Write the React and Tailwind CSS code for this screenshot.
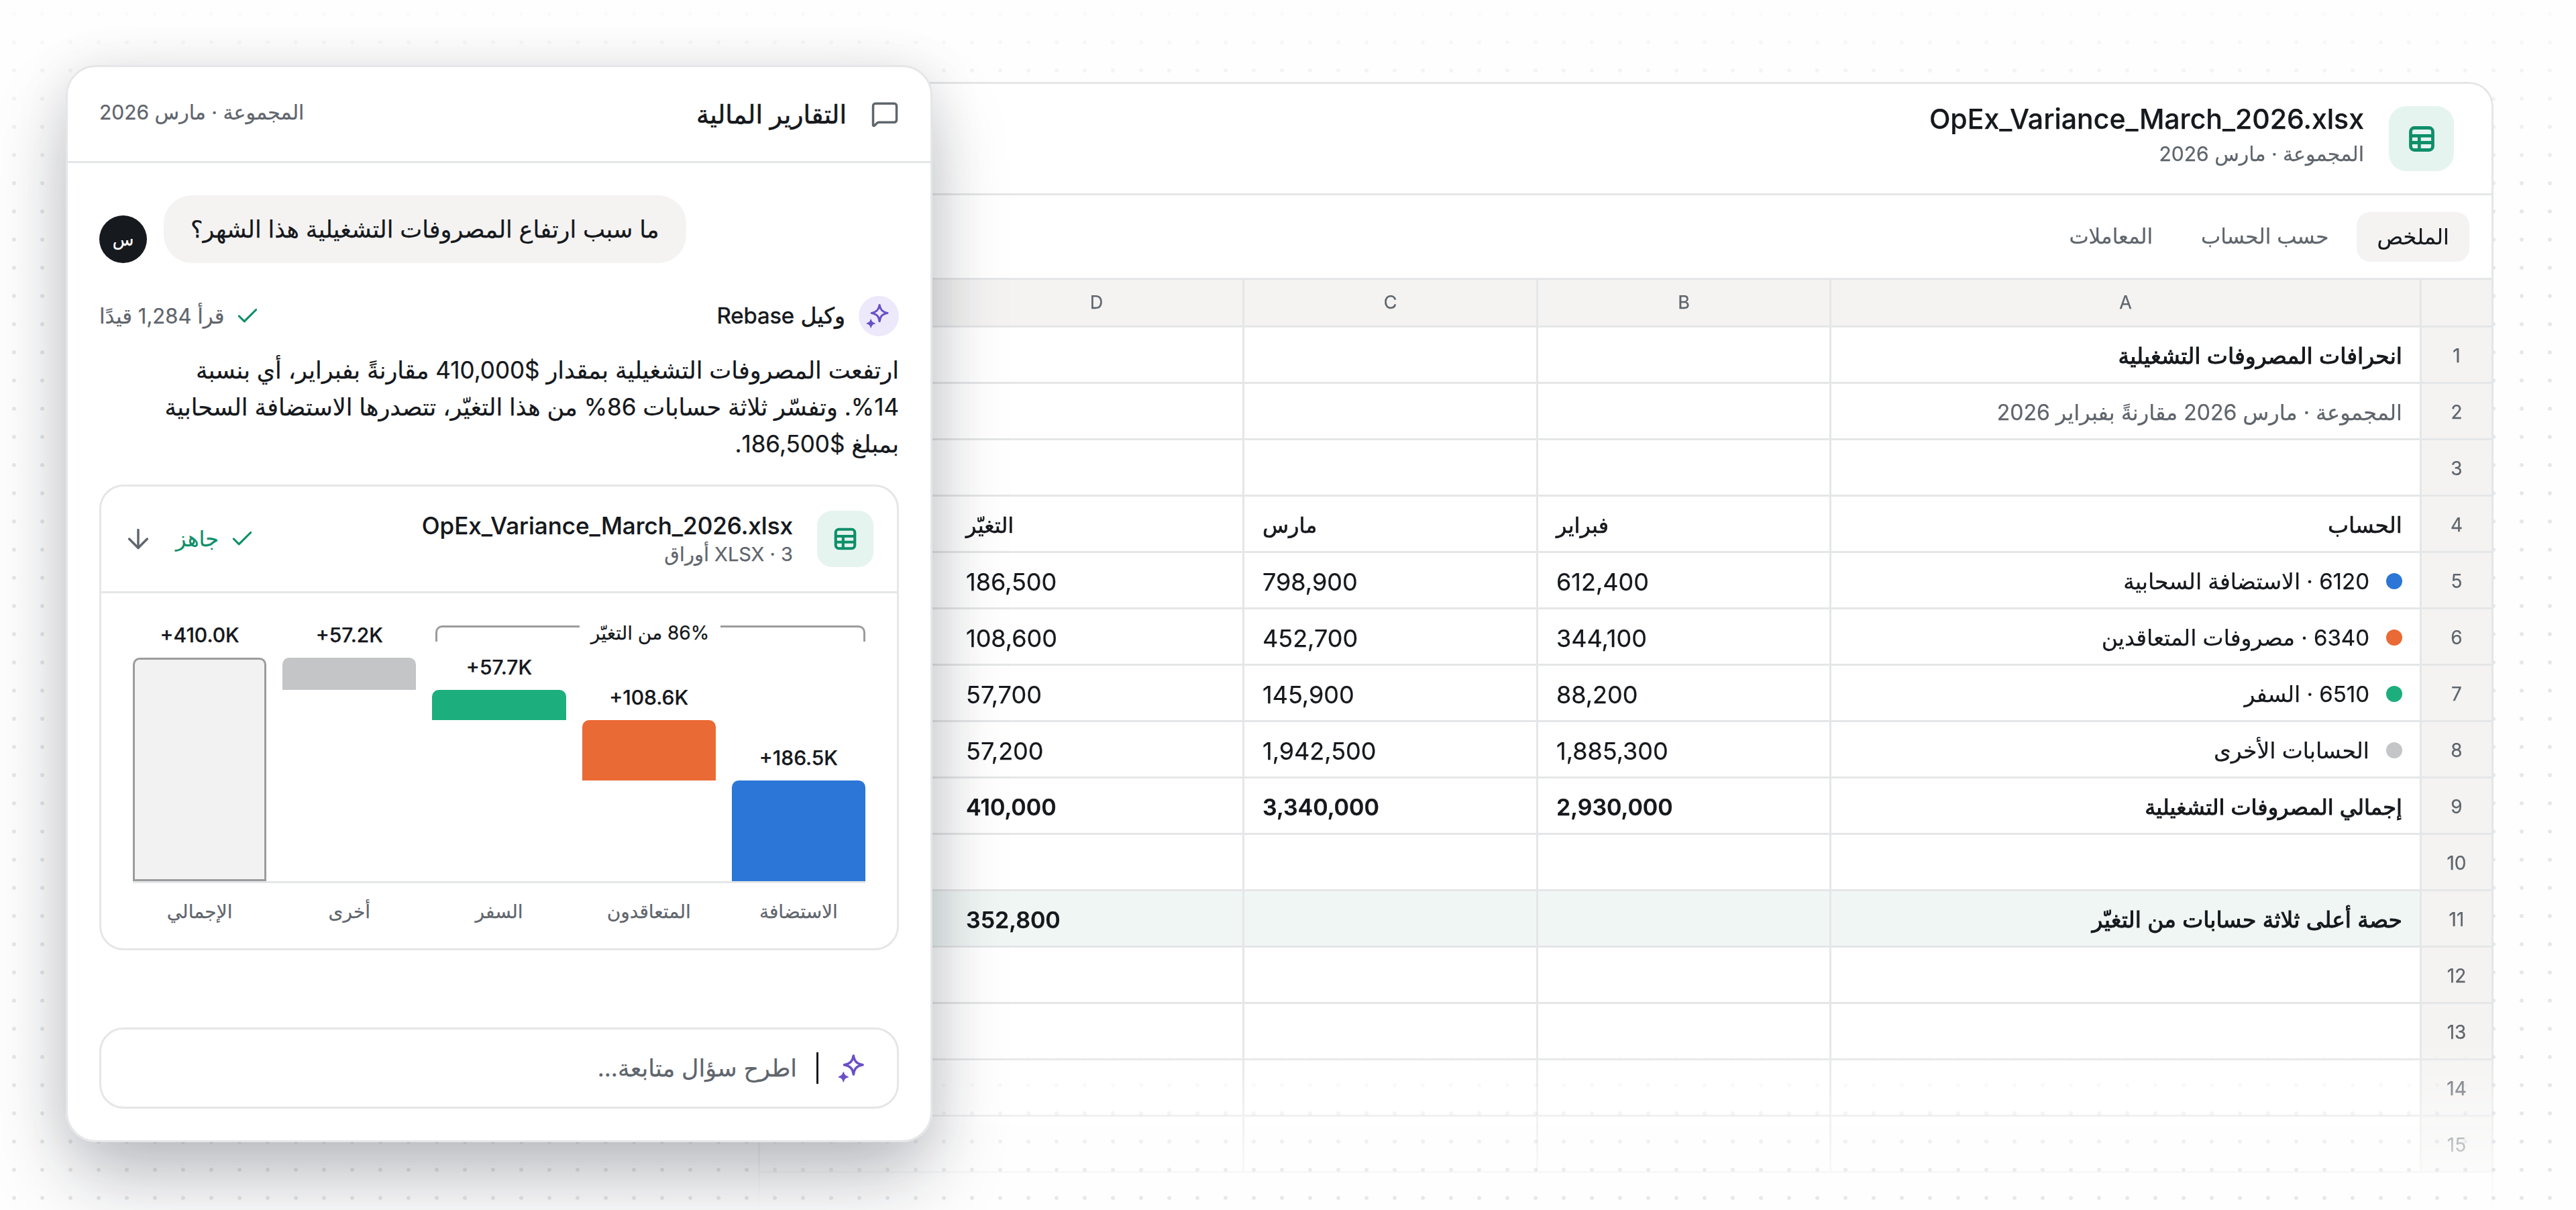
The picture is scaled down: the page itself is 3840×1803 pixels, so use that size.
import { ArrowDown, Check, MessageSquare } from "lucide-react";

const rows = [
  { n: 1, a: "انحرافات المصروفات التشغيلية", bold: true },
  { n: 2, a: "المجموعة · مارس 2026 مقارنةً بفبراير 2026", muted: true },
  { n: 3 },
  { n: 4, a: "الحساب", b: "فبراير", c: "مارس", d: "التغيّر", head: true },
  { n: 5, a: "6120 · الاستضافة السحابية", dot: "bg-[#2b76d6]", b: "612,400", c: "798,900", d: "186,500" },
  { n: 6, a: "6340 · مصروفات المتعاقدين", dot: "bg-[#ea6a35]", b: "344,100", c: "452,700", d: "108,600" },
  { n: 7, a: "6510 · السفر", dot: "bg-[#1cae7c]", b: "88,200", c: "145,900", d: "57,700" },
  { n: 8, a: "الحسابات الأخرى", dot: "bg-[#c4c5c6]", b: "1,885,300", c: "1,942,500", d: "57,200" },
  { n: 9, a: "إجمالي المصروفات التشغيلية", b: "2,930,000", c: "3,340,000", d: "410,000", bold: true },
  { n: 10 },
  { n: 11, a: "حصة أعلى ثلاثة حسابات من التغيّر", d: "352,800", bold: true, tint: true },
  { n: 12 },
  { n: 13 },
  { n: 14 },
  { n: 15 },
];

const bars = [
  { label: "الاستضافة", value: "+186.5K", h: "h-[150px]", pb: "pb-0", color: "bg-[#2b76d6]" },
  { label: "المتعاقدون", value: "+108.6K", h: "h-[90px]", pb: "pb-[150px]", color: "bg-[#ea6a35]" },
  { label: "السفر", value: "+57.7K", h: "h-[45px]", pb: "pb-[240px]", color: "bg-[#1cae7c]" },
  { label: "أخرى", value: "+57.2K", h: "h-[48px]", pb: "pb-[285px]", color: "bg-[#c4c5c6]" },
  { label: "الإجمالي", value: "+410.0K", h: "h-[333px]", pb: "pb-0", color: "bg-[#f2f2f2] border-[3px] border-[#9b9c9d]" },
];

// DejaVu has no medium weight for Arabic, a thin stroke stands in for it
const medium = "[-webkit-text-stroke:0.6px]";
const semibold = "[-webkit-text-stroke:1px]";

function TableIcon({ className }) {
  return (
    <svg viewBox="0 0 24 24" fill="none" stroke="currentColor" strokeWidth="2.6" className={className}>
      <rect x="3" y="3" width="18" height="18" rx="3" />
      <path d="M3 9.5h18M3 15h18M10 9.5V21" />
    </svg>
  );
}

function Sparkle({ className }) {
  return (
    <svg viewBox="0 0 44 44" fill="none" className={className}>
      <path
        d="M23.3 3C24.5 11 28 15 37 16.7 28 18.5 24.5 22 23.3 31 22 22 18.5 18.5 9.5 16.7 18.5 15 22 11 23.3 3Z"
        stroke="currentColor"
        strokeWidth="3.6"
        strokeLinejoin="round"
      />
      <path
        d="M8.3 28C9 32 11 34 15 34.7 11 35.4 9 37.5 8.3 41.5 7.6 37.5 5.6 35.4 1.5 34.7 5.6 34 7.6 32 8.3 28Z"
        fill="currentColor"
        stroke="currentColor"
        strokeWidth="1.6"
        strokeLinejoin="round"
      />
    </svg>
  );
}

function Row({ row }) {
  const tint = row.tint ? "bg-[#f0f6f4]" : "";
  const weight = row.bold ? "font-semibold text-[34px]" : row.head ? `text-[32px] ${medium}` : "text-[36px]";
  let nameSize = "text-[33px]";
  if (row.muted) nameSize = "text-[32px]";
  if (row.n === 9) nameSize = "text-[32px]";
  return (
    <>
      <div className="flex h-[84px] items-center justify-center border-b-[3px] border-l-[3px] border-[#e5e6e7] bg-[#f4f3f2] pt-[2px] text-[28px] text-[#5f656c]">
        {row.n}
      </div>
      <div className={`flex h-[84px] items-center gap-[25px] border-b-[3px] border-l-[3px] border-[#e5e6e7] pr-[26px] pt-[4px] ${tint}`}>
        {row.dot && <span className={`-mt-[2px] h-6 w-6 rounded-full ${row.dot}`} />}
        <span className={`${nameSize} ${row.bold ? semibold : ""} ${row.head ? medium : ""} ${row.muted ? "text-[#5f656c]" : "text-[#15181c]"}`}>
          {row.a}
        </span>
      </div>
      {["b", "c"].map((key) => (
        <div
          key={key}
          dir={row.head ? "rtl" : "ltr"}
          className={`flex h-[84px] items-center border-b-[3px] border-l-[3px] border-[#e5e6e7] pl-[27px] pt-[4px] text-[#15181c] ${row.head ? "justify-end" : ""} ${weight} ${tint}`}
        >
          {row[key]}
        </div>
      ))}
      <div
        dir={row.head ? "rtl" : "ltr"}
        className={`flex h-[84px] items-center border-b-[3px] border-[#e5e6e7] pl-[307px] pt-[4px] text-[#15181c] ${row.head ? "justify-end" : ""} ${weight} ${tint}`}
      >
        {row.d}
      </div>
    </>
  );
}

function SheetWindow() {
  return (
    <div className="ml-[1130px] h-[1681px] w-[2587px] overflow-hidden rounded-t-[36px] border-[3px] border-b-0 border-[#e5e6e7] bg-white [mask-image:linear-gradient(to_bottom,black_85%,transparent_100%)]">
      <div dir="rtl">
        <div className="flex h-[166px] items-center gap-[37px] border-b-[3px] border-[#e5e6e7] pr-[56px]">
          <div className="flex h-[97px] w-[97px] items-center justify-center rounded-[26px] bg-[#e6f4ef] text-[#0e8f6a]">
            <TableIcon className="h-[44px] w-[44px]" />
          </div>
          <div className="pb-[4px]">
            <div dir="ltr" className="text-right text-[41px] font-medium leading-[48px] text-[#15181c]">
              OpEx_Variance_March_2026.xlsx
            </div>
            <div className="text-[30px] leading-[56px] text-[#5f656c]">المجموعة · مارس 2026</div>
          </div>
        </div>
        <div className="flex h-[126px] items-center gap-3 border-b-[3px] border-[#e5e6e7] pr-[33px]">
          <div className="flex h-[74px] items-center rounded-[20px] bg-[#f4f3f2] px-[30px] text-[32px] text-[#15181c]">الملخص</div>
          <div className="flex h-[74px] items-center px-[30px] text-[31px] text-[#5f656c]">حسب الحساب</div>
          <div className="flex h-[74px] items-center px-[30px] text-[31px] text-[#5f656c]">المعاملات</div>
        </div>
        <div className="grid grid-cols-[107px_880px_437px_438px_1fr]">
          <div className="h-[71px] border-b-[3px] border-l-[3px] border-[#e5e6e7] bg-[#f4f3f2]" />
          {["A", "B", "C"].map((col) => (
            <div key={col} className="flex h-[71px] items-center justify-center border-b-[3px] border-l-[3px] border-[#e5e6e7] bg-[#f4f3f2] text-[27px] text-[#5f656c]">
              {col}
            </div>
          ))}
          <div className="flex h-[71px] items-center justify-center border-b-[3px] border-[#e5e6e7] bg-[#f4f3f2] pl-[284px] text-[27px] text-[#5f656c]">
            D
          </div>
          {rows.map((row) => (
            <Row key={row.n} row={row} />
          ))}
        </div>
      </div>
    </div>
  );
}

function Chart() {
  return (
    <div className="px-[47px] pb-[13px]">
      <div className="relative grid h-[429px] grid-cols-5 gap-6">
        {bars.map((bar) => (
          <div key={bar.label} className={`flex flex-col justify-end ${bar.pb}`}>
            <div dir="ltr" className="mb-[14px] h-10 text-center text-[30px] font-medium leading-10 text-[#15181c]">
              {bar.value}
            </div>
            <div className={`${bar.h} rounded-t-[10px] ${bar.color}`} />
          </div>
        ))}
        <div className="absolute right-0 top-[48px] h-[24px] w-[641px] rounded-t-[10px] border-[3px] border-b-0 border-[#9b9c9d]">
          <div className="absolute right-[213px] top-[-16px] flex h-[48px] w-[210px] items-center justify-center bg-white text-[28px] text-[#15181c]">
            86% من التغيّر
          </div>
        </div>
      </div>
      <div className="grid grid-cols-5 gap-6 border-t-[3px] border-[#e5e6e7]">
        {bars.map((bar) => (
          <div key={bar.label} className="flex h-[84px] items-center justify-center text-[28px] text-[#5f656c]">
            {bar.label}
          </div>
        ))}
      </div>
    </div>
  );
}

function ChatPanel() {
  return (
    <div className="absolute left-[98px] top-[97px] flex h-[1605px] w-[1292px] flex-col rounded-[45px] border-[3px] border-[#e5e6e7] bg-white/[0.97] shadow-[0_60px_120px_-10px_rgba(16,24,40,0.26),0_10px_80px_rgba(16,24,40,0.1)]">
      <div className="flex h-[143px] shrink-0 items-center justify-between border-b-[3px] border-[#e5e6e7] px-[47px]">
        <div className="flex items-center gap-[36px]">
          <MessageSquare className="h-[42px] w-[42px] text-[#5f656c]" strokeWidth={2} />
          <span className={`text-[38px] text-[#15181c] ${medium}`}>التقارير المالية</span>
        </div>
        <span className="pb-[6px] text-[30px] text-[#5f656c]">المجموعة · مارس 2026</span>
      </div>
      <div className="flex flex-1 flex-col px-[47px] pb-[47px] pt-[48px]">
        <div className="flex flex-row-reverse items-end gap-[25px]">
          <div className="flex h-[71px] w-[71px] items-center justify-center rounded-full bg-[#16191d] text-[26px] text-white">س</div>
          <div className="flex h-[101px] items-center rounded-[42px] bg-[#f4f3f2] px-[40px] text-[35px] text-[#15181c]">
            ما سبب ارتفاع المصروفات التشغيلية هذا الشهر؟
          </div>
        </div>
        <div className="mt-[49px] flex h-[60px] items-center justify-between">
          <div className="flex items-center gap-[20px]">
            <div className="flex h-[60px] w-[60px] items-center justify-center rounded-full bg-[#ede9fb] text-[#6a4fc9]">
              <Sparkle className="h-[38px] w-[38px]" />
            </div>
            <span className={`text-[33px] text-[#15181c] ${medium}`}>وكيل Rebase</span>
          </div>
          <div className="flex items-center gap-[15px] text-[31px] text-[#5f656c]">
            <Check className="h-[38px] w-[38px] text-[#0e8f6a]" strokeWidth={2} />
            قرأ 1,284 قيدًا
          </div>
        </div>
        <p className="mt-[23px] max-w-[1135px] text-[35px] leading-[55px] text-[#15181c]">
          ارتفعت المصروفات التشغيلية بمقدار $410,000 مقارنةً بفبراير، أي بنسبة 14%. وتفسّر ثلاثة حسابات 86% من هذا التغيّر، تتصدرها الاستضافة السحابية بمبلغ $186,500.
        </p>
        <div className="mt-[33px] rounded-[36px] border-[3px] border-[#e5e6e7]">
          <div className="flex h-[159px] items-center justify-between border-b-[3px] border-[#e5e6e7] pl-[32px] pr-[35px]">
            <div className="flex items-center gap-[36px]">
              <div className="flex h-[84px] w-[84px] items-center justify-center rounded-[22px] bg-[#e6f4ef] text-[#0e8f6a]">
                <TableIcon className="h-[38px] w-[38px]" />
              </div>
              <div>
                <div dir="ltr" className="text-right text-[35px] font-medium leading-[46px] text-[#15181c]">
                  OpEx_Variance_March_2026.xlsx
                </div>
                <div className="text-[29px] leading-[40px] text-[#5f656c]">3 · XLSX أوراق</div>
              </div>
            </div>
            <div className="flex items-center gap-[33px]">
              <div className="flex items-center gap-[16px] text-[32px] text-[#0e8f6a]">
                <Check className="h-[38px] w-[38px]" strokeWidth={2} />
                جاهز
              </div>
              <ArrowDown className="h-[46px] w-[46px] text-[#5f656c]" strokeWidth={1.8} />
            </div>
          </div>
          <Chart />
        </div>
        <div className="mt-auto flex h-[121px] items-center rounded-[36px] border-[3px] border-[#e5e6e7] pr-[44px]">
          <Sparkle className="h-[44px] w-[44px] text-[#6a4fc9]" />
          <span className="mr-[29px] h-[47px] w-[3px] bg-[#15181c]" />
          <span className="mr-[29px] text-[35px] text-[#5f656c]">اطرح سؤال متابعة...</span>
        </div>
      </div>
    </div>
  );
}

export default function App() {
  return (
    <div className="relative h-[1803px] w-[3840px] overflow-hidden bg-[#fefefe] font-['Inter','DejaVu_Sans',sans-serif] [-webkit-text-stroke:0.25px]">
      <div className="absolute inset-0 bg-[radial-gradient(circle,#e6e8ea_2.8px,transparent_3.2px)] bg-[length:42px_42px] [mask-image:linear-gradient(to_bottom,rgba(0,0,0,0.1)_0,black_300px)]" />
      <div className="relative pt-[122px]">
        <SheetWindow />
      </div>
      <div dir="rtl">
        <ChatPanel />
      </div>
    </div>
  );
}
